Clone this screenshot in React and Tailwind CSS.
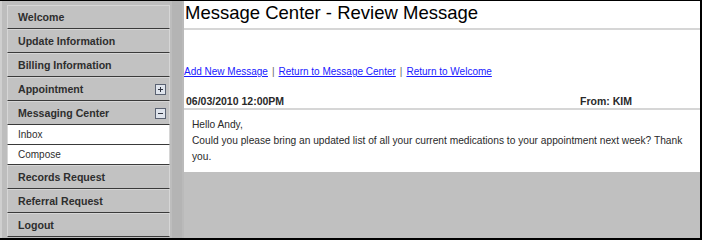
import React from "react";

const font = { fontFamily: '"Liberation Sans", Arial, sans-serif' };

const ToggleIcon = ({ open }) => (
  <svg width="11" height="11" viewBox="0 0 11 11" className="shrink-0">
    <rect x="0.5" y="0.5" width="10" height="10" fill="#dfe4ec" stroke="#5a6272" />
    <line x1="3" y1="5.5" x2="8" y2="5.5" stroke="#2f3440" strokeWidth="1" />
    {!open && <line x1="5.5" y1="3" x2="5.5" y2="8" stroke="#2f3440" strokeWidth="1" />}
  </svg>
);

const NavItem = ({ label, toggle }) => (
  <div className="h-[24px] flex items-center justify-between pl-[10px] pr-[3px] bg-[#c2c2c2] border-t border-l border-r border-t-[#d6d6d6] border-l-[#d6d6d6] border-r-[#d6d6d6] border-b border-b-[#3a3a3a] text-[10.6px] font-bold text-[#2e2e2e]">
    <span className="pt-[1px]">{label}</span>
    {toggle && <ToggleIcon open={toggle === "open"} />}
  </div>
);

const SubItem = ({ label }) => (
  <div className="h-[20px] flex items-center pl-[10px] bg-white border-l border-r border-[#d6d6d6] border-b border-b-[#3a3a3a] text-[10px] text-[#2e2e2e]">
    {label}
  </div>
);

const Sep = () => <span className="mx-[4px] text-[#666]">|</span>;

export default function App() {
  return (
    <div
      style={font}
      className="w-[702px] h-[240px] bg-[#c0c0c0] border-t border-r-2 border-b-2 border-black flex overflow-hidden"
    >
      <div className="w-[172px] shrink-0 bg-[#bdbdbd] pt-[4px] pl-[5px] pr-[2px] border-l-2 border-l-[#cfcfcf]">
        <NavItem label="Welcome" />
        <NavItem label="Update Information" />
        <NavItem label="Billing Information" />
        <NavItem label="Appointment" toggle="closed" />
        <NavItem label="Messaging Center" toggle="open" />
        <SubItem label="Inbox" />
        <SubItem label="Compose" />
        <NavItem label="Records Request" />
        <NavItem label="Referral Request" />
        <NavItem label="Logout" />
      </div>

      <div className="w-[12px] shrink-0 bg-[#bababa] border-l-[10px] border-[#b4b4b4]" />

      <div className="flex-1 h-[171px] bg-white">
        <div className="h-[29px] border-b-2 border-[#d6d6d6] pl-[1px] pt-[1px]">
          <h1 className="text-[18.5px] leading-[22px] text-black">
            Message Center - Review Message
          </h1>
        </div>

        <div className="mt-[35px] h-[14px] leading-[14px] text-[10px] text-[#555]">
          <a href="#" className="text-[#1a1aff] underline">Add New Message</a>
          <Sep />
          <a href="#" className="text-[#1a1aff] underline">Return to Message Center</a>
          <Sep />
          <a href="#" className="text-[#1a1aff] underline">Return to Welcome</a>
        </div>

        <div className="mt-[15px] flex h-[16px] pb-[2px] border-b-2 border-[#d6d6d6] text-[10.5px] font-bold leading-[14px] text-[#2a2a2a]">
          <div className="w-[396px] pl-[2px]">06/03/2010 12:00PM</div>
          <div>From: KIM</div>
        </div>

        <div className="pt-[7px] pl-[8px] pr-[8px] text-[10.2px] leading-[16px] text-[#2a2a2a]">
          <p>Hello Andy,</p>
          <p>
            Could you please bring an updated list of all your current medications to your appointment next week? Thank you.
          </p>
        </div>
      </div>
    </div>
  );
}
